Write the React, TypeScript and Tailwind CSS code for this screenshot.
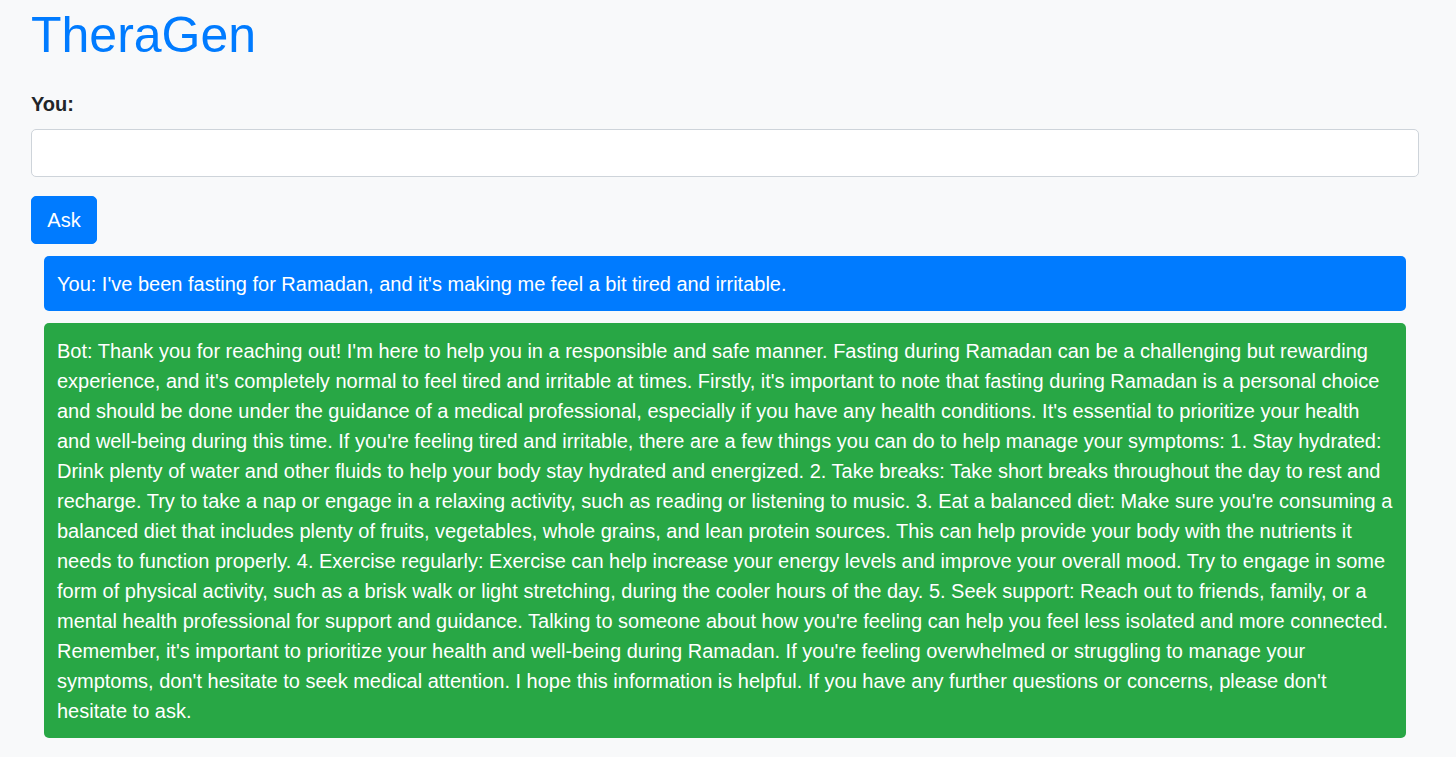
import React from "react";

const botText =
  "Bot: Thank you for reaching out! I'm here to help you in a responsible and safe manner. Fasting during Ramadan can be a challenging but rewarding experience, and it's completely normal to feel tired and irritable at times. Firstly, it's important to note that fasting during Ramadan is a personal choice and should be done under the guidance of a medical professional, especially if you have any health conditions. It's essential to prioritize your health and well-being during this time. If you're feeling tired and irritable, there are a few things you can do to help manage your symptoms: 1. Stay hydrated: Drink plenty of water and other fluids to help your body stay hydrated and energized. 2. Take breaks: Take short breaks throughout the day to rest and recharge. Try to take a nap or engage in a relaxing activity, such as reading or listening to music. 3. Eat a balanced diet: Make sure you're consuming a balanced diet that includes plenty of fruits, vegetables, whole grains, and lean protein sources. This can help provide your body with the nutrients it needs to function properly. 4. Exercise regularly: Exercise can help increase your energy levels and improve your overall mood. Try to engage in some form of physical activity, such as a brisk walk or light stretching, during the cooler hours of the day. 5. Seek support: Reach out to friends, family, or a mental health professional for support and guidance. Talking to someone about how you're feeling can help you feel less isolated and more connected. Remember, it's important to prioritize your health and well-being during Ramadan. If you're feeling overwhelmed or struggling to manage your symptoms, don't hesitate to seek medical attention. I hope this information is helpful. If you have any further questions or concerns, please don't hesitate to ask.";

export default function App() {
  return (
    <div
      className="min-h-screen bg-[#f8f9fa] pl-[31px] pr-[37px] pb-[19px] text-[#212529]"
      style={{ fontFamily: '"Liberation Sans", Arial, sans-serif' }}
    >
      <h1 className="pt-[5px] text-[50px] leading-[60px] font-normal text-[#007bff]">TheraGen</h1>
      <label className="mt-[24px] block text-[20px] leading-[30px] font-bold">You:</label>
      <input
        type="text"
        className="mt-[10px] block h-[48px] w-full rounded-[5px] border border-[#ced4da] bg-white px-4 text-[20px] outline-none"
      />
      <button className="mt-[19px] h-[48px] w-[66px] rounded-[5px] border border-[#007bff] bg-[#007bff] text-center text-[20px] leading-[30px] text-white">
        Ask
      </button>
      <div className="mx-[13px] mt-[12px] flex flex-col gap-[12px]">
        <div className="rounded-[5px] bg-[#007bff] px-[13px] pt-[13px] pb-[12px] text-[20px] leading-[30px] text-white">
          You: I've been fasting for Ramadan, and it's making me feel a bit tired and irritable.
        </div>
        <div className="rounded-[5px] bg-[#28a745] px-[13px] pt-[13px] pb-[12px] text-[20px] leading-[30px] text-white">
          {botText}
        </div>
      </div>
    </div>
  );
}
